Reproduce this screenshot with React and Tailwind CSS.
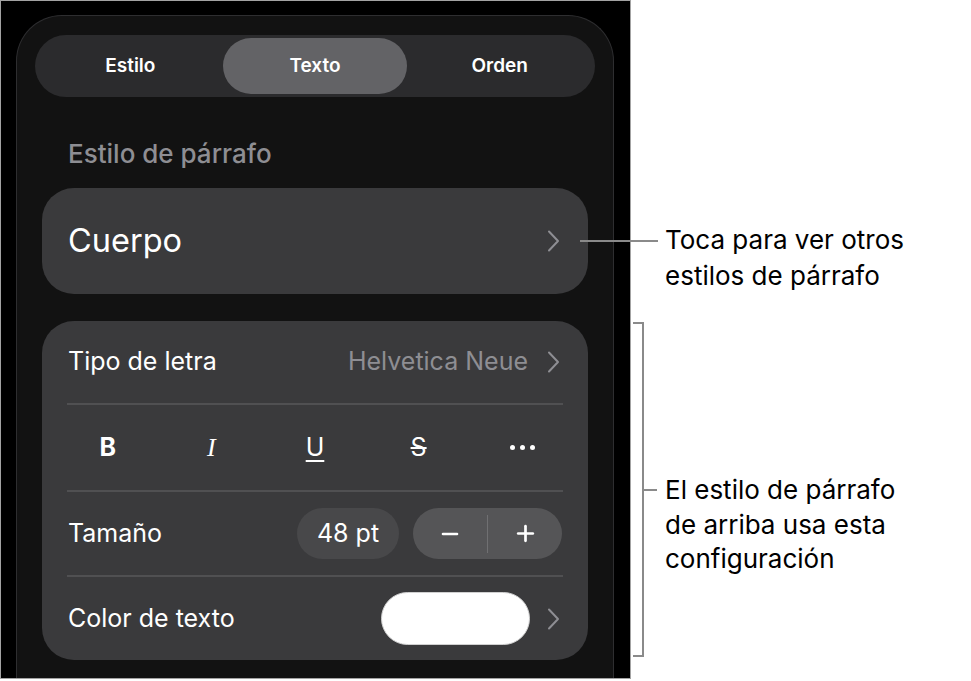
import { Minus, Plus } from "lucide-react"

const font = { fontFamily: "Inter, 'Noto Sans', sans-serif" }

function Chevron({ className = "" }) {
  return (
    <svg width="13" height="22" viewBox="0 0 13 22" className={className}>
      <path d="M2 1.5 L11 11 L2 20.5" fill="none" stroke="#8e8e93" strokeWidth="2" strokeLinecap="round" strokeLinejoin="round" />
    </svg>
  )
}

function Divider() {
  return <div className="mx-[25px] h-[2px] bg-[#505052]" />
}

export default function App() {
  return (
    <div className="relative flex w-[971px] h-[681px] bg-white overflow-hidden" style={font}>
      {/* Phone screenshot */}
      <div className="flex flex-col w-[631px] h-[679px] bg-black border border-[#a3a3a3] overflow-hidden">
        <div className="flex-1 ml-[15px] mt-[14px] w-[598px] rounded-t-[46px] border border-b-0 border-[#2e2e30] bg-[#121212]">
          {/* Tabs */}
          <div className="mx-[18px] mt-[19px] h-[62px] rounded-full bg-[#2b2b2d] p-[3px] grid grid-cols-3 text-[19px] font-semibold text-white">
            <div className="flex items-center justify-center">Estilo</div>
            <div className="flex items-center justify-center rounded-full bg-[#636366]">Texto</div>
            <div className="flex items-center justify-center">Orden</div>
          </div>

          <div className="pl-[51px] mt-[42px] text-[26px] leading-[30px] font-medium text-[#8e8e93]">Estilo de párrafo</div>

          <div className="px-[25px]">
            {/* Paragraph style */}
            <div className="mt-[19px] h-[106px] rounded-[32px] bg-[#3a3a3c] flex items-center justify-between pl-[26px] pr-[28px]">
              <span className="text-[32.5px] text-white">Cuerpo</span>
              <Chevron />
            </div>

            {/* Font settings */}
            <div className="mt-[27px] rounded-[32px] bg-[#3a3a3c] text-white text-[25px]">
              <div className="h-[82px] flex items-center justify-between pl-[26px] pr-[28px]">
                <span>Tipo de letra</span>
                <div className="flex items-center gap-[19px]">
                  <span className="text-[#8e8e93]">Helvetica Neue</span>
                  <Chevron />
                </div>
              </div>
              <Divider />
              <div className="h-[85px] grid grid-cols-5 px-[14px] items-center justify-items-center">
                <span className="text-[25px] font-bold">B</span>
                <span className="text-[26px] italic" style={{ fontFamily: "'Liberation Serif', serif" }}>I</span>
                <span className="text-[25px] underline underline-offset-[4px] decoration-[2px]">U</span>
                <span className="text-[25px] line-through decoration-[2px]">S</span>
                <div className="flex gap-[5px]">
                  <span className="w-[5px] h-[5px] rounded-full bg-white" />
                  <span className="w-[5px] h-[5px] rounded-full bg-white" />
                  <span className="w-[5px] h-[5px] rounded-full bg-white" />
                </div>
              </div>
              <Divider />
              <div className="h-[83px] flex items-center justify-between pl-[26px] pr-[26px]">
                <span>Tamaño</span>
                <div className="flex items-center gap-[14px]">
                  <div className="w-[102px] h-[51px] rounded-full bg-[#48484a] flex items-center justify-center">48 pt</div>
                  <div className="w-[149px] h-[51px] rounded-full bg-[#555557] flex items-center">
                    <div className="flex-1 flex items-center justify-center">
                      <Minus size={24} strokeWidth={2.6} />
                    </div>
                    <div className="w-[1px] h-[38px] bg-[#707072]" />
                    <div className="flex-1 flex items-center justify-center">
                      <Plus size={25} strokeWidth={2.6} />
                    </div>
                  </div>
                </div>
              </div>
              <Divider />
              <div className="h-[83px] flex items-center justify-between pl-[26px] pr-[28px]">
                <span>Color de texto</span>
                <div className="flex items-center gap-[17px]">
                  <div className="w-[149px] h-[53px] rounded-full bg-white border border-[#d0d0d0]" />
                  <Chevron />
                </div>
              </div>
            </div>
          </div>
        </div>
      </div>

      {/* Callout texts */}
      <div className="flex-1 pl-[34px] text-[26px] leading-[36px] text-black">
        <div className="mt-[222px]">
          Toca para ver otros
          <br />
          estilos de párrafo
        </div>
        <div className="mt-[179px] leading-[34.5px]">
          El estilo de párrafo
          <br />
          de arriba usa esta
          <br />
          configuración
        </div>
      </div>

      {/* Leader lines */}
      <div className="absolute left-[580px] top-[240px] w-[78px] h-[2px] bg-[#8a8a8a]" />
      <div className="absolute left-[633px] top-[322px] w-[11px] h-[335px] border-2 border-l-0 border-[#8a8a8a]" />
      <div className="absolute left-[644px] top-[489px] w-[13px] h-[2px] bg-[#8a8a8a]" />
    </div>
  )
}
